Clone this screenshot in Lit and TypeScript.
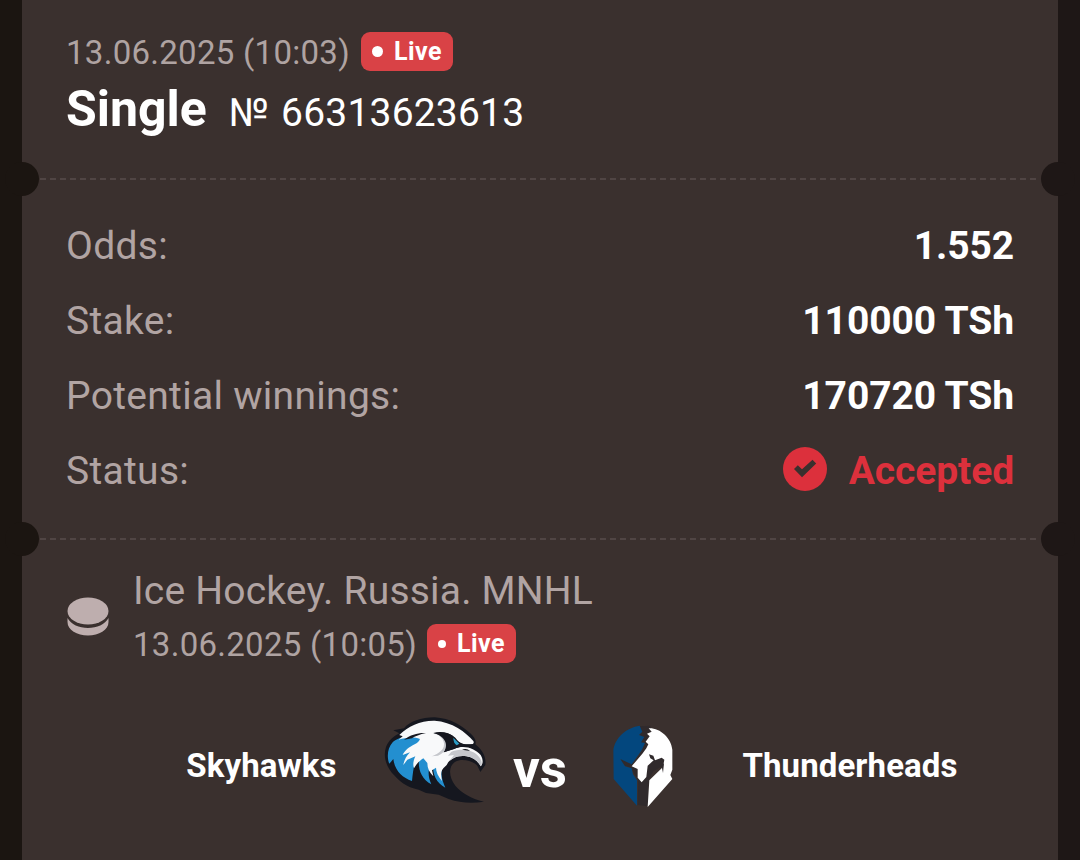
import { LitElement, css, html, svg } from "lit";
import { customElement, property } from "lit/decorators.js";
import { classMap } from "lit/directives/class-map.js";

interface BetRow {
  label: string;
  value: string;
  accepted?: boolean;
}

const ROWS: BetRow[] = [
  { label: "Odds:", value: "1.552" },
  { label: "Stake:", value: "110000 TSh" },
  { label: "Potential winnings:", value: "170720 TSh" },
  { label: "Status:", value: "Accepted", accepted: true }
];

const checkIcon = svg`
  <circle cx="22" cy="22" r="22" fill="#dc303c" />
  <path d="M11 22 L14.8 18.2 L19 22.2 L29.500 12.8 L33.2 16.6 L19 30.2 Z" fill="#3a302e" />
`;

const puckIcon = svg`
  <ellipse cx="21" cy="14" rx="20.500" ry="13.500" />
  <path d="M0.500 21 C4 27.500 12 31 21 31 C30 31 38 27.500 41.500 21 V25 C41.500 33 32 38.500 21 38.500 C10 38.500 0.500 33 0.500 25 Z" />
`;

const hawkLogo = svg`
  <path fill="#15171f" d="M40 52 L72 46 C88 26 124 13 164 13 C212 16 242 36 270 60 C282 70 290 82 286 94 C304 108 320 130 316 156 L301 177 L292 158 C276 142 244 136 226 146 C204 160 206 192 226 218 C246 240 272 256 312 266 C276 272 240 270 206 258 L176 245 L138 240 L116 230 C78 222 58 204 44 188 C20 166 8 132 18 102 C26 82 40 70 58 61 Z" />
  <path fill="#238fd0" d="M120 74 C84 66 52 74 38 88 C22 106 20 132 28 152 L40 138 C44 172 66 194 96 204 C98 184 100 166 104 152 L122 128 L140 90 Z" />
  <path fill="#238fd0" d="M118 134 C112 162 122 198 154 214 C144 192 144 174 150 160 L150 130 Z" />
  <path fill="#238fd0" d="M160 150 C156 186 170 210 196 224 C186 200 180 180 188 162 Z" />
  <path fill="#f8f9fa" d="M58 66 C84 40 122 22 164 23 C216 26 258 58 280 84 C284 92 278 95 266 94 C248 95 236 89 226 74 C208 58 184 56 160 61 C184 65 198 76 199 92 C200 104 194 113 190 118 L222 108 C252 94 284 106 302 126 C310 140 310 152 302 160 C294 144 280 134 260 130 C232 125 208 138 200 156 L190 166 C180 178 184 190 186 204 C174 190 168 176 168 164 L156 172 L160 190 C148 178 142 166 142 150 L130 136 C118 144 110 152 102 166 C98 154 100 144 106 130 L82 140 L70 156 C72 142 80 128 90 118 L68 126 C74 112 88 102 104 94 C112 90 118 84 120 78 C100 70 76 74 56 80 L68 70 Z" />
  <path fill="#c5c7cc" d="M164 62 C190 70 198 92 188 108 C178 120 162 128 154 130 L174 128 C190 122 202 108 200 92 C198 74 182 64 164 62 Z M214 116 C248 104 280 112 294 128 C306 140 308 154 302 160 C294 144 280 134 260 130 C240 126 222 132 208 144 L222 126 L204 128 Z" />
  <path fill="#15171f" d="M72 80 C92 64 118 58 138 60 C120 64 104 70 96 76 Z M160 60 C182 54 208 58 224 74 C236 90 248 96 276 94 L288 96 C260 96 236 102 222 108 L192 118 C208 92 192 68 160 60 Z M246 110 C256 106 264 108 270 114 L256 112 Z" />
  <path fill="#2b9bc4" d="M220 74 L238 92 L230 97 C223 92 220 84 220 74 Z" />
`;

const helmetLogo = svg`
  <path fill="#302a2c" d="M100 22 L136 20 L140 60 L134 96 L180 112 L178 138 L146 156 L132 180 L128 262 L98 258 L100 184 L76 146 L48 136 L48 118 L88 132 L112 92 Z" />
  <path fill="#03477e" d="M104 20 C64 26 30 56 25 94 L26 180 L96 260 L96 184 L84 166 L80 148 L60 142 L46 120 L80 136 L110 94 L120 72 L108 70 L118 54 L102 48 L112 38 Z" />
  <path fill="#fff" d="M131 28 C164 26 198 56 202 92 V152 L196 168 L202 180 L128 264 L133 184 L174 144 L178 122 L170 116 L150 124 L145 110 L132 106 L136 118 L146 124 L128 140 L124 174 L110 190 L98 176 L98 150 L80 142 L112 104 L124 88 L130 76 L122 68 L134 52 L126 44 L140 38 Z" />
  <path fill="#302a2c" d="M170 142 L177 132 L174 162 Z" />
`;

@customElement("live-badge")
class LiveBadge extends LitElement {
  @property({ type: Boolean }) small = false;

  static styles = css`
    :host {
      display: block;
    }
    .badge {
      display: flex;
      align-items: center;
      box-sizing: border-box;
      width: 92px;
      height: 39px;
      padding-left: 11px;
      gap: 11px;
      border-radius: 9px;
      background: #d94246;
      color: #fff;
      font: 700 25px/39px Roboto, sans-serif;
      letter-spacing: 0.5px;
    }
    .dot {
      width: 11px;
      height: 11px;
      border-radius: 50%;
      background: #fff;
    }
    .small {
      width: 89px;
    }
    .small .dot {
      width: 8px;
      height: 8px;
    }
  `;

  render() {
    return html`
      <div class=${classMap({ badge: true, small: this.small })}>
        <span class="dot"></span>
        <span>Live</span>
      </div>
    `;
  }
}

@customElement("app-root")
class AppRoot extends LitElement {
  static styles = css`
    :host {
      display: block;
      height: 860px;
      overflow: hidden;
      background: linear-gradient(90deg, #1b1511 50%, #1e1716 50%);
      font-family: Roboto, sans-serif;
      color: #fff;
    }
    .card {
      margin: 0 22px;
      height: 860px;
      background: #3a302e;
    }
    section {
      position: relative;
      box-sizing: border-box;
      padding: 0 44px;
    }
    .head {
      height: 179px;
      padding-top: 32px;
    }
    .details {
      height: 360px;
      padding-top: 30px;
    }
    .event {
      padding-top: 29px;
    }
    .cut::before,
    .cut::after {
      content: "";
      position: absolute;
      bottom: -17px;
      width: 34px;
      height: 34px;
      border-radius: 50%;
    }
    .cut::before {
      left: -17px;
      background: #1b1511;
    }
    .cut::after {
      right: -17px;
      background: #1e1716;
    }
    .dash {
      position: absolute;
      left: 18px;
      right: 18px;
      bottom: -1px;
      height: 2px;
      background: repeating-linear-gradient(90deg, #504544 0 6px, #3a302e 6px 10px);
    }
    .when {
      display: flex;
      align-items: center;
      gap: 11px;
      height: 39px;
      color: #afa3a2;
      font-size: 33px;
      letter-spacing: 0.28px;
      line-height: 39px;
    }
    .date {
      padding-top: 2px;
    }
    .title {
      display: flex;
      align-items: baseline;
      gap: 22px;
      line-height: 76px;
    }
    .kind {
      font-size: 50px;
      font-weight: 700;
    }
    .number {
      font-size: 39px;
      letter-spacing: 0.2px;
      word-spacing: 2px;
      margin-bottom: 1px;
    }
    .row {
      display: flex;
      justify-content: space-between;
      height: 75px;
      line-height: 75px;
      font-size: 39px;
    }
    .label {
      color: #b1a4a3;
      letter-spacing: 0.3px;
    }
    .value {
      display: flex;
      align-items: center;
      gap: 22px;
      font-weight: 700;
      letter-spacing: -0.1px;
    }
    .accepted {
      color: #dc303c;
    }
    .check {
      width: 44px;
      height: 44px;
      margin-bottom: 5px;
    }
    .league {
      display: flex;
      align-items: center;
      gap: 24px;
      padding-left: 1px;
    }
    .league .when {
      gap: 10px;
    }
    .puck {
      width: 42px;
      height: 39px;
      margin-top: 2px;
      fill: #beaeae;
    }
    .league-name {
      height: 56px;
      line-height: 46px;
      font-size: 39px;
      letter-spacing: 0.2px;
      color: #b1a4a3;
    }
    .teams {
      display: grid;
      grid-template-columns: 248px 110px 90px 120px 300px;
      align-items: center;
      height: 120px;
      margin: 37px 0 0 66px;
    }
    .team {
      text-align: center;
      font-size: 33px;
      font-weight: 700;
      line-height: 40px;
      letter-spacing: 0.1px;
      margin-top: 12px;
    }
    .home {
      padding-left: 11px;
    }
    .hawk {
      width: 110px;
      height: 94px;
    }
    .helmet {
      width: 74px;
      height: 92px;
      margin: 9px 0 0 25px;
    }
    .vs {
      padding-left: 10px;
      text-align: center;
      font-size: 53px;
      font-weight: 700;
      line-height: 60px;
      margin-top: 17px;
    }
  `;

  private _renderRow(row: BetRow) {
    return html`
      <div class="row">
        <span class="label">${row.label}</span>
        <span class=${classMap({ value: true, accepted: !!row.accepted })}>
          ${row.accepted ? html`<svg class="check" viewBox="0 0 44 44">${checkIcon}</svg>` : ""}
          <span>${row.value}</span>
        </span>
      </div>
    `;
  }

  render() {
    return html`
      <div class="card">
        <section class="head cut">
          <div class="when"><span class="date">13.06.2025 (10:03)</span><live-badge></live-badge></div>
          <div class="title">
            <span class="kind">Single</span>
            <span class="number">№ 66313623613</span>
          </div>
          <div class="dash"></div>
        </section>
        <section class="details cut">
          ${ROWS.map((row) => this._renderRow(row))}
          <div class="dash"></div>
        </section>
        <section class="event">
          <div class="league">
            <svg class="puck" viewBox="0 0 42 39">${puckIcon}</svg>
            <div>
              <div class="league-name">Ice Hockey. Russia. MNHL</div>
              <div class="when"><span class="date">13.06.2025 (10:05)</span><live-badge small></live-badge></div>
            </div>
          </div>
          <div class="teams">
            <span class="team home">Skyhawks</span>
            <svg class="hawk" viewBox="0 0 330 282">${hawkLogo}</svg>
            <span class="vs">vs</span>
            <svg class="helmet" viewBox="0 0 222 276">${helmetLogo}</svg>
            <span class="team">Thunderheads</span>
          </div>
        </section>
      </div>
    `;
  }
}
